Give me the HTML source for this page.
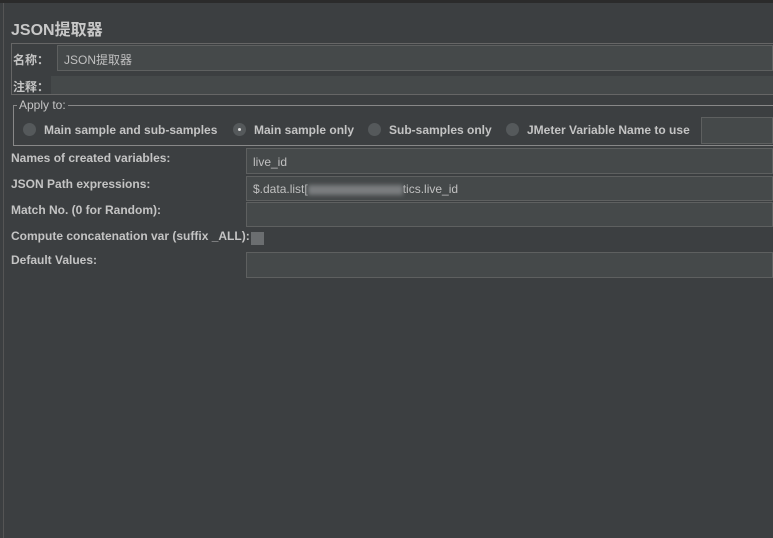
<!DOCTYPE html>
<html><head><meta charset="utf-8"><style>
body{margin:0;width:773px;height:538px;background:#3c3f41;position:relative;overflow:hidden;font-family:"Liberation Sans","Noto Sans CJK SC",sans-serif;color:#bbbbbb;font-size:12px}
.a{position:absolute}
.f{position:absolute;background:#45494a;border:1px solid #5e6060;box-sizing:border-box}
.l{position:absolute;font-weight:bold;font-size:12px;color:#c4c4c4}
.r{position:absolute;width:13px;height:13px;border-radius:50%;background:#55595b;top:123px}
</style></head><body>
<div class="a" style="left:0;top:0;width:773px;height:3px;background:#2b2b2b"></div>
<div class="a" style="left:3px;top:3px;width:1px;height:535px;background:#555"></div>
<div class="a" style="left:11px;top:16px;font-size:16px;font-weight:bold;color:#c8c8c8">JSON提取器</div>
<div class="a" style="left:11px;top:43px;width:762px;height:52px;border:1px solid #666;border-right:none;box-sizing:border-box"></div>
<div class="l" style="left:13px;top:51px">名称：</div>
<div class="f" style="left:57px;top:45px;width:716px;height:26px;padding:5px 6px;font-size:12px;color:#c0c0c0">JSON提取器</div>
<div class="l" style="left:13px;top:78px">注释：</div>
<div class="a" style="left:51px;top:76px;width:722px;height:18px;background:#45494a"></div>
<div class="a" style="left:13px;top:105px;width:760px;height:41px;border:1px solid #888;border-right:none;box-sizing:border-box"></div>
<div class="a" style="left:17px;top:98px;background:#3c3f41;padding:0 2px;color:#c4c4c4">Apply to:</div>
<div class="r" style="left:23px"></div><div class="l" style="left:44px;top:123px">Main sample and sub-samples</div>
<div class="r" style="left:233px"></div><div class="a" style="left:238px;top:128px;width:3px;height:3px;background:#ddd;border-radius:50%"></div><div class="l" style="left:254px;top:123px">Main sample only</div>
<div class="r" style="left:368px"></div><div class="l" style="left:389px;top:123px">Sub-samples only</div>
<div class="r" style="left:506px"></div><div class="l" style="left:527px;top:123px">JMeter Variable Name to use</div>
<div class="f" style="left:701px;top:117px;width:72px;height:27px"></div>
<div class="l" style="left:11px;top:151px">Names of created variables:</div>
<div class="f" style="left:246px;top:148px;width:527px;height:26px;padding:6px 6px;color:#c0c0c0">live_id</div>
<div class="l" style="left:11px;top:177px">JSON Path expressions:</div>
<div class="f" style="left:246px;top:176px;width:527px;height:25px;padding:5px 6px;color:#c0c0c0">$.data.list[<span style="display:inline-block;width:95px;height:10px;background:#7a7d7f;vertical-align:middle;filter:blur(2px)"></span>tics.live_id</div>
<div class="l" style="left:11px;top:203px">Match No. (0 for Random):</div>
<div class="f" style="left:246px;top:202px;width:527px;height:25px"></div>
<div class="l" style="left:11px;top:229px">Compute concatenation var (suffix _ALL):</div>
<div class="a" style="left:251px;top:232px;width:13px;height:13px;background:#6b6e70"></div>
<div class="l" style="left:11px;top:253px">Default Values:</div>
<div class="f" style="left:246px;top:252px;width:527px;height:26px"></div>
</body></html>
